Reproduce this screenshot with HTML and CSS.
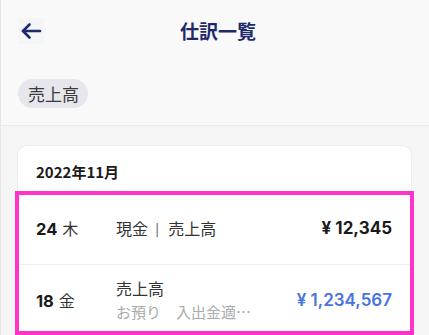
FILE: index.html
```html
<!DOCTYPE html>
<html lang="ja">
<head>
<meta charset="utf-8">
<link rel="stylesheet" href="styles.css">
</head>
<body>
<div class="app">
  <header class="topbar">
    <button class="back" aria-label="戻る">
      <svg width="22" height="18" viewBox="0 0 22 18" fill="none" stroke="#1f2a6b" stroke-width="2.6" stroke-linecap="round" stroke-linejoin="round">
        <path d="M20 9H3"/>
        <path d="M9.5 2.5L3 9l6.5 6.5"/>
      </svg>
    </button>
    <h1 class="title">仕訳一覧</h1>
    <span></span>
  </header>
  <div class="filters">
    <span class="chip">売上高</span>
  </div>
  <main class="content">
    <section class="card">
      <div class="month">2022年11月</div>
      <div class="rows">
        <div class="row">
          <div class="date"><b>24</b>木</div>
          <div class="desc"><div class="main-text">現金<span class="sep">|</span>売上高</div></div>
          <div class="amount">¥ 12,345</div>
        </div>
        <div class="row row2">
          <div class="date"><b>18</b>金</div>
          <div class="desc">
            <div class="main-text">売上高</div>
            <div class="sub-text">お預り　入出金適…</div>
          </div>
          <div class="amount blue">¥ 1,234,567</div>
        </div>
      </div>
    </section>
  </main>
</div>
</body>
</html>
```

FILE: styles.css
```css
* { box-sizing: border-box; }
html, body { margin: 0; padding: 0; }
body {
  font-family: "Noto Sans CJK JP", sans-serif;
  background: #f5f5f5;
  width: 429px;
  height: 335px;
  overflow: hidden;
}
.app {
  border-left: 1px solid #e6e6e6;
  min-height: 335px;
  background: #f5f5f5;
}
.topbar {
  display: grid;
  grid-template-columns: 1fr auto 1fr;
  align-items: center;
  height: 60px;
  padding: 0 17px;
  background: #f9f9fa;
}
.back {
  width: 26px;
  height: 26px;
  padding: 0;
  border: 0;
  background: #f4f5f7;
  display: flex;
  align-items: center;
  justify-content: center;
  justify-self: start;
  margin-top: 1px;
}
.title {
  margin: 0;
  font-size: 19px;
  font-weight: 700;
  color: #1f2a6b;
  padding-left: 6px;
}
.filters {
  background: #f9f9fa;
  padding: 19px 17px 17px;
  height: 66px;
  border-bottom: 1px solid #ebebeb;
}
.chip {
  display: inline-block;
  height: 29px;
  line-height: 29px;
  padding: 0 9px 0 10px;
  border-radius: 15px;
  background: #e6e6ec;
  color: #3a3a3a;
  font-size: 17px;
}
.content {
  padding: 19px 17px 0 16px;
}
.card {
  background: #fff;
  border-radius: 10px;
  border: 1px solid #ededed;
  border-bottom: 0;
}
.month {
  height: 45px;
  padding: 11px 0 0 18px;
  font-size: 15px;
  font-weight: 700;
  color: #1a1a1a;
  line-height: 30px;
}
.rows {
  position: relative;
}
.rows::after {
  content: "";
  position: absolute;
  left: -3px;
  right: -3px;
  top: 0;
  bottom: 4px;
  border: 4px solid #ff33cc;
  pointer-events: none;
}
.row {
  display: flex;
  align-items: center;
  height: 74px;
  padding: 0 19px 0 18px;
  border-bottom: 1px solid #efefef;
}
.row2 {
  height: 74px;
  border-bottom: 0;
  padding-bottom: 5px;
}
.date {
  width: 80px;
  font-size: 16px;
  color: #333;
}
.date b {
  font-family: "Inter", "Noto Sans CJK JP", sans-serif;
  font-weight: 700;
  color: #1a1a1a;
  font-size: 16.5px;
  margin-right: 5px;
}
.desc {
  flex: 1;
}
.main-text {
  font-size: 16px;
  color: #333;
  line-height: 22px;
}
.sep {
  display: inline-block;
  margin: 0 9px 0 7px;
  color: #666;
  transform: scaleY(0.8);
}
.sub-text {
  font-size: 15px;
  color: #aaa;
  line-height: 20px;
  margin-top: 3px;
}
.amount {
  font-family: "Inter", "Noto Sans CJK JP", sans-serif;
  font-weight: 700;
  font-size: 17px;
  color: #1a1a1a;
}
.amount.blue {
  color: #4a72e0;
  font-weight: 600;
}
```
